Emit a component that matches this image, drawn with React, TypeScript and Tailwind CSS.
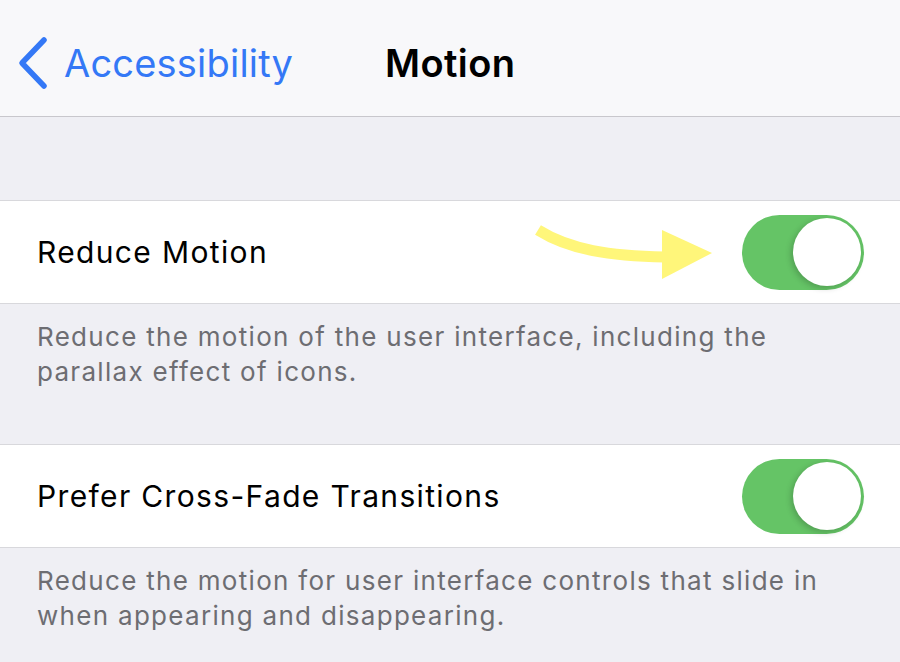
function BackChevron() {
  return (
    <svg width="34" height="54" viewBox="0 0 34 54" className="shrink-0">
      <polyline
        points="27,4 5,27 27,50"
        fill="none"
        stroke="#3478f6"
        strokeWidth="5.5"
        strokeLinecap="round"
        strokeLinejoin="round"
      />
    </svg>
  );
}

function Toggle() {
  return (
    <div className="relative flex h-[75px] w-[122px] items-center justify-end rounded-full bg-[#65c466] pr-[3px]">
      <div className="h-[68px] w-[68px] rounded-full bg-white shadow-[-2px_2px_6px_rgba(0,0,0,0.2)]" />
    </div>
  );
}

function Arrow() {
  return (
    <svg width="190" height="70" viewBox="0 0 190 70" className="absolute left-[530px] top-[220px]">
      <path d="M8 10 C 40 30, 80 36, 135 37" stroke="#fff67a" strokeWidth="11" fill="none" />
      <polygon points="132,10 182,33 132,59" fill="#fff67a" />
    </svg>
  );
}

function Row({ label }: { label: string }) {
  return (
    <div className="flex h-[104px] items-center justify-between border-y border-[#d8d8dc] bg-white pl-[37px] pr-[36px]">
      <span className="text-[30px] tracking-[1.35px] text-black">{label}</span>
      <Toggle />
    </div>
  );
}

function Footer({ text, height }: { text: string; height: string }) {
  return (
    <div className={`${height} pl-[37px] pr-[30px] pt-[15px] text-[26px] leading-[35px] tracking-[1.3px] text-[#6d6d72]`}>
      {text}
    </div>
  );
}

export default function App() {
  return (
    <div
      className="relative h-[662px] w-[900px] overflow-hidden bg-[#efeff4]"
      style={{ fontFamily: "Inter, 'Open Sans', sans-serif" }}
    >
      <div className="relative flex h-[117px] items-center border-b border-[#c8c7cc] bg-[#f8f8fa] pt-[10px]">
        <div className="flex items-center pl-[17px] text-[#3478f6]">
          <BackChevron />
          <span className="ml-[13px] text-[38px] tracking-[0.2px]">Accessibility</span>
        </div>
        <span className="absolute left-[385px] text-[38px] font-semibold tracking-[0.4px] text-black">Motion</span>
      </div>
      <div className="h-[83px]" />
      <Row label="Reduce Motion" />
      <Footer
        height="h-[140px]"
        text="Reduce the motion of the user interface, including the parallax effect of icons."
      />
      <Row label="Prefer Cross-Fade Transitions" />
      <Footer
        height="h-[120px]"
        text="Reduce the motion for user interface controls that slide in when appearing and disappearing."
      />
      <Arrow />
    </div>
  );
}
